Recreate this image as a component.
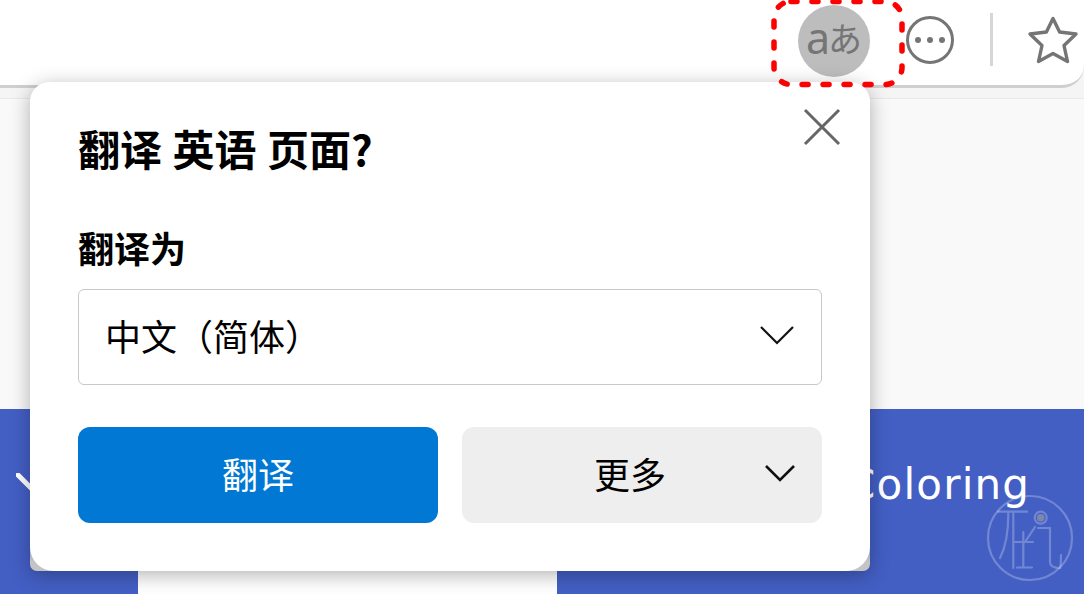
<div class="page">
  <header class="toolbar">
    <button class="translate-btn" aria-label="翻译"><span class="latin">a</span><span class="kana">あ</span></button>
    <svg class="more-icon" viewBox="0 0 48 48" width="48" height="48" aria-hidden="true">
      <circle cx="24" cy="24" r="22.5" fill="none" stroke="#757575" stroke-width="3"/>
      <circle cx="12" cy="24" r="3" fill="#757575"/>
      <circle cx="24" cy="24" r="3" fill="#757575"/>
      <circle cx="36" cy="24" r="3" fill="#757575"/>
    </svg>
    <span class="divider"></span>
    <svg class="star-icon" viewBox="0 0 54 54" width="54" height="54" aria-hidden="true">
      <path d="M27 4.5 L33.6 18 L50 20 L38 31.5 L41.5 47.5 L27 39.5 L12.5 47.5 L16 31.5 L4 20 L20.4 18 Z" fill="none" stroke="#757575" stroke-width="3.4" stroke-linejoin="round"/>
    </svg>
  </header>
  <div class="strip"></div>

  <main class="content">
    <section class="band">
      <div class="cell left">
        <svg class="back" viewBox="0 0 40 40" width="40" height="40" aria-hidden="true">
          <path d="M2 2 L24 24" stroke="#fff" stroke-width="5" stroke-linecap="round" fill="none"/>
        </svg>
      </div>
      <div class="cell middle"><div class="white"></div></div>
      <div class="cell right"><span class="title">Coloring</span></div>
      <svg class="mark" viewBox="0 0 90 90" width="90" height="90" aria-hidden="true">
        <g fill="none" stroke="#fff" stroke-opacity=".25" stroke-width="2.2" stroke-linecap="round">
          <circle cx="45" cy="44" r="42"/>
          <path d="M13 17.7 H42 M23.3 18 C23.5 35 22 50 15 64 M28.3 19 V74 M50 33 L40 48 M28 48 H48 M38.3 38 V73 M32 73.5 H47 M53 34 H65 V68 C65 73 70 74 75 74 C76 70 76 65 76 61"/>
          <circle cx="55.7" cy="23.7" r="6"/>
        </g>
        <circle cx="55.7" cy="23.7" r="3.8" fill="#7d87a8"/>
      </svg>
    </section>
  </main>

  <svg class="dashes" width="140" height="94" viewBox="0 0 140 94" aria-hidden="true">
    <rect x="7" y="1.5" width="128" height="83" rx="17" fill="none" stroke="#ff0000" stroke-width="5.5" stroke-linecap="round" stroke-dasharray="6 15"/>
  </svg>

  <aside class="shell">
    <div class="popup">
      <svg class="close" viewBox="0 0 38 38" width="38" height="38" aria-hidden="true">
        <path d="M2 2 L36 36 M36 2 L2 36" stroke="#666" stroke-width="3" fill="none"/>
      </svg>
      <h1>翻译 英语 页面?</h1>
      <div class="label">翻译为</div>
      <div class="select">
        <span>中文（简体）</span>
        <svg viewBox="0 0 36 20" width="36" height="20" aria-hidden="true"><path d="M2 2 L18 18 L34 2" fill="none" stroke="#111" stroke-width="2.2"/></svg>
      </div>
      <div class="actions">
        <button class="primary">翻译</button>
        <button class="secondary">
          <span>更多</span>
          <svg viewBox="0 0 32 20" width="32" height="20" aria-hidden="true"><path d="M2 3 L16 17 L30 3" fill="none" stroke="#111" stroke-width="2.6"/></svg>
        </button>
      </div>
    </div>
  </aside>
</div>

<style>
  :global(body) { margin: 0; background: #f9f9f9; }
  .page {
    position: relative;
    width: 1084px;
    height: 594px;
    overflow: hidden;
    display: flex;
    flex-direction: column;
    background: #f5f5f5;
    font-family: "Noto Sans CJK SC", "Noto Sans", sans-serif;
  }
  .toolbar {
    height: 85px;
    flex: none;
    background: #fff;
    border-bottom: 3px solid #cfcfcf;
    border-bottom-right-radius: 22px;
    display: flex;
    align-items: flex-start;
    padding-left: 798px;
  }
  .strip {
    height: 10px;
    flex: none;
    background: #f5f5f5;
    border-bottom: 1px solid #e9e9e9;
  }
  .translate-btn {
    width: 72px;
    height: 72px;
    margin-top: 5px;
    padding: 0;
    border: 0;
    border-radius: 50%;
    background: #bdbdbd;
    color: #757575;
    display: flex;
    align-items: center;
    justify-content: center;
    font-family: "Noto Sans", sans-serif;
  }
  .latin { font-size: 43px; font-weight: 400; line-height: 1; margin-top: -8px; }
  .kana { font-family: "Noto Sans CJK JP", sans-serif; font-size: 34px; line-height: 1; margin-left: -2px; margin-top: -6px; }
  .more-icon { margin-left: 36px; margin-top: 16px; flex: none; }
  .divider { width: 3px; height: 53px; margin-left: 36px; margin-top: 13px; background: #d6d6d6; flex: none; }
  .star-icon { margin-left: 33px; margin-top: 14px; flex: none; }

  .content {
    flex: 1;
    min-height: 0;
    padding-top: 310px;
    box-sizing: border-box;
    display: flex;
    flex-direction: column;
    background: #f9f9f9;
  }
  .band {
    position: relative;
    flex: 1;
    background: #435fc4;
    display: grid;
    grid-template-columns: 138px 419px 1fr;
  }
  .cell { position: relative; min-width: 0; }
  .back { margin: 64px 0 0 16px; display: block; }
  .white { position: absolute; left: 0; right: 0; top: 120px; bottom: 0; background: #fff; }
  .title {
    display: block;
    margin: 47px 0 0 289px;
    font-family: "DejaVu Sans", sans-serif;
    font-size: 42px;
    line-height: 58px;
    letter-spacing: 1.2px;
    color: #fff;
    white-space: nowrap;
  }
  .mark { position: absolute; left: 985px; top: 85px; }

  .dashes { position: absolute; left: 767px; top: 0; z-index: 3; }

  .shell {
    position: absolute;
    left: 30px;
    top: 82px;
    width: 840px;
    height: 489px;
    border-radius: 20px 20px 7px 7px;
    background: linear-gradient(to bottom, transparent 92%, #c4c4c4 98%);
    box-shadow: 0 4px 20px rgba(0, 0, 0, .3);
    z-index: 2;
  }
  .popup {
    position: relative;
    height: 100%;
    box-sizing: border-box;
    padding: 0 48px;
    background: #fff;
    border-radius: 20px 20px 24px 24px;
    color: #000;
  }
  .close { position: absolute; right: 29px; top: 26px; }
  h1 {
    margin: 0;
    padding-top: 37px;
    font-size: 42px;
    line-height: 58px;
    font-weight: 700;
    word-spacing: 1px;
    white-space: nowrap;
  }
  .label {
    margin-top: 44px;
    font-size: 36px;
    line-height: 52px;
    font-weight: 700;
  }
  .select {
    margin-top: 16px;
    height: 96px;
    box-sizing: border-box;
    border: 1px solid #c8c8c8;
    border-radius: 6px;
    padding: 0 26px 4px 26px;
    display: flex;
    align-items: center;
    justify-content: space-between;
    font-size: 36px;
  }
  .actions {
    margin-top: 42px;
    display: grid;
    grid-template-columns: 360px 360px;
    gap: 24px;
  }
  button { font-family: inherit; }
  .primary, .secondary {
    height: 96px;
    border: 0;
    border-radius: 12px;
    font-size: 36px;
    padding: 0 0 4px;
  }
  .primary { background: #0078d4; color: #fff; }
  .secondary {
    background: #eeeeee;
    color: #000;
    position: relative;
    display: flex;
    align-items: center;
    justify-content: center;
  }
  .secondary svg { position: absolute; right: 26px; top: 36px; }
  .secondary span { margin-right: 24px; }
</style>
